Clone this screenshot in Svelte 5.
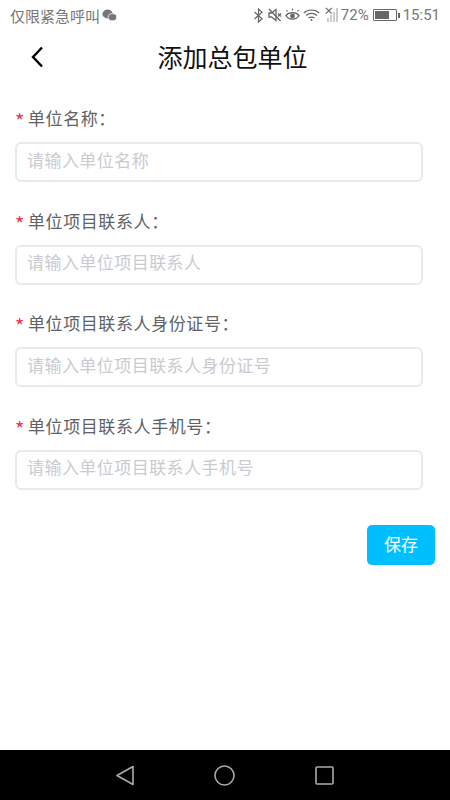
<script lang="ts">
  const fields = [
    { label: '单位名称：', placeholder: '请输入单位名称' },
    { label: '单位项目联系人：', placeholder: '请输入单位项目联系人' },
    { label: '单位项目联系人身份证号：', placeholder: '请输入单位项目联系人身份证号' },
    { label: '单位项目联系人手机号：', placeholder: '请输入单位项目联系人手机号' },
  ];
</script>

<div class="page">
  <div class="status">
    <div class="status-left">
      <span>仅限紧急呼叫</span>
      <svg class="wechat" width="15" height="13" viewBox="0 0 15 13">
        <ellipse cx="5.6" cy="5" rx="5.2" ry="4.4" fill="#777"/>
        <ellipse cx="10.4" cy="8.2" rx="4.3" ry="3.6" fill="#777" stroke="#fff" stroke-width="0.8"/>
      </svg>
    </div>
    <div class="status-right">
      <svg width="9" height="15" viewBox="0 0 9 15" fill="none" stroke="#666" stroke-width="1.2">
        <path d="M0.500 4l7.500 6.700-3.500 3.300V1L8 4.300 0.500 11"/>
      </svg>
      <svg class="m-mute" width="14" height="14" viewBox="0 0 14 14" fill="none" stroke="#666" stroke-width="1.3">
        <path d="M1 5h2.500L8 1.500v11L3.500 9H1z"/>
        <path d="M1 1l11.500 12M10 5.500l3 3M13 5.500l-3 3"/>
      </svg>
      <svg class="m-eye" width="15" height="14" viewBox="0 0 15 14" fill="none" stroke="#666" stroke-width="1.3">
        <path d="M1 7.500c2.800-3.800 10.200-3.800 13 0-2.800 4.800-10.200 4.800-13 0z"/>
        <circle cx="7.500" cy="8" r="2.400" fill="#666" stroke="none"/>
        <path d="M2.500 3.500L1.500 2M7.500 2.500V0.500M12.500 3.500l1-1.500" stroke-width="1.100"/>
      </svg>
      <svg class="m-wifi" width="17" height="14" viewBox="0 0 17 14" fill="none" stroke="#666" stroke-width="1.200">
        <path d="M0.800 5c4.200-4 11.200-4 15.400 0M3 7.500c3-2.800 8-2.800 11 0M5.500 10c1.500-1.300 4.500-1.300 6 0"/>
        <circle cx="8.500" cy="12" r="1" fill="#666" stroke="none"/>
      </svg>
      <div class="signal">
        <span class="x">×</span>
        <i style="height: 4px"></i><i style="height: 7px"></i><i style="height: 10px"></i><i style="height: 14px"></i>
      </div>
      <span class="pct">72%</span>
      <div class="battery"><div class="level"></div></div>
      <div class="tip"></div>
      <span class="time">15:51</span>
    </div>
  </div>

  <div class="nav">
    <button class="back" aria-label="返回">
      <svg width="14" height="22" viewBox="0 0 14 22" fill="none" stroke="#000" stroke-width="2.400">
        <path d="M12 1.500L3 11l9 9.500"/>
      </svg>
    </button>
    <h1 class="title">添加总包单位</h1>
  </div>

  <div class="form">
    {#each fields as f}
      <div class="field">
        <div class="label"><span class="star">*</span>{f.label}</div>
        <div class="input">{f.placeholder}</div>
      </div>
    {/each}
    <div class="actions">
      <button class="save">保存</button>
    </div>
  </div>

  <div class="softkeys">
    <svg width="18" height="21" viewBox="0 0 18 21" fill="none" stroke="#aaa" stroke-width="1.600" stroke-linejoin="round"><path d="M17 1.500v18L1 10.500z"/></svg>
    <svg width="21" height="21" viewBox="0 0 21 21" fill="none" stroke="#aaa" stroke-width="1.600"><circle cx="10.500" cy="10.500" r="9.500"/></svg>
    <svg width="19" height="19" viewBox="0 0 19 19" fill="none" stroke="#aaa" stroke-width="1.600" stroke-linejoin="round"><rect x="1" y="1" width="17" height="17" rx="1"/></svg>
  </div>
</div>

<style>
  :global(body) {
    margin: 0;
    background: #fff;
  }
  .page {
    height: 800px;
    display: flex;
    flex-direction: column;
    font-family: "Noto Sans CJK SC", "Noto Sans", sans-serif;
    overflow: hidden;
  }
  .status {
    height: 30px;
    flex-shrink: 0;
    display: flex;
    align-items: center;
    justify-content: space-between;
    padding: 0 10px;
    color: #777;
    font-size: 15px;
  }
  .status-left, .status-right {
    display: flex;
    align-items: center;
  }
  .wechat { margin-left: 2px; }
  .m-mute { margin-left: 5px; }
  .m-eye { margin-left: 3px; }
  .m-wifi { margin-left: 3px; }
  .signal {
    position: relative;
    display: flex;
    align-items: flex-end;
    gap: 1px;
    height: 14px;
    margin-left: 4px;
    width: 14px;
    justify-content: flex-end;
  }
  .signal i {
    width: 2px;
    background: #ccc;
  }
  .signal .x {
    position: absolute;
    left: 0;
    top: -5px;
    font-size: 10px;
    font-weight: 700;
    color: #666;
  }
  .pct {
    font-family: Roboto, sans-serif;
    margin-left: 3px;
  }
  .battery {
    width: 24px;
    height: 12px;
    border: 1px solid #666;
    border-radius: 1px;
    margin-left: 4px;
    padding: 1px;
    box-sizing: border-box;
  }
  .level {
    width: 72%;
    height: 100%;
    background: #666;
  }
  .tip {
    width: 2px;
    height: 5px;
    background: #666;
    margin-left: 1px;
  }
  .time {
    font-family: Roboto, sans-serif;
    margin-left: 3px;
  }
  .nav {
    height: 56px;
    flex-shrink: 0;
    position: relative;
    display: flex;
    align-items: center;
    justify-content: center;
    padding: 0 0 4px 15px;
    box-sizing: border-box;
  }
  .back {
    position: absolute;
    left: 30px;
    top: 16px;
    padding: 0;
    border: none;
    background: none;
    display: flex;
  }
  .title {
    margin: 0;
    font-size: 25px;
    font-weight: 400;
    color: #111;
    line-height: 1;
  }
  .form {
    flex: 1;
    padding: 0 15px;
    display: flex;
    flex-direction: column;
  }
  .field {
    display: flex;
    flex-direction: column;
    padding-top: 20px;
    height: 102.500px;
    box-sizing: border-box;
  }
  .label {
    font-size: 17px;
    line-height: 24px;
    color: #606266;
    letter-spacing: 0.600px;
    margin-bottom: 11px;
  }
  .star {
    color: #f0304f;
    font-size: 20px;
    line-height: 20px;
    margin-right: 3px;
    vertical-align: -4px;
  }
  .input {
    height: 40px;
    box-sizing: border-box;
    width: 408px;
    border: 2px solid #e8e9eb;
    border-radius: 6px;
    padding: 0 10px 6px;
    display: flex;
    align-items: center;
    font-size: 17px;
    color: #c9cbd0;
    letter-spacing: 0.450px;
  }
  .actions {
    display: flex;
    justify-content: flex-end;
    margin-top: 29px;
  }
  .save {
    width: 68px;
    height: 40px;
    border: none;
    border-radius: 5px;
    background: #00bfff;
    color: #fff;
    font-family: inherit;
    font-size: 17px;
    padding: 0 0 4px;
  }
  .softkeys {
    height: 50px;
    flex-shrink: 0;
    background: #000;
    display: flex;
    align-items: center;
    justify-content: center;
    gap: 80px;
  }
</style>
